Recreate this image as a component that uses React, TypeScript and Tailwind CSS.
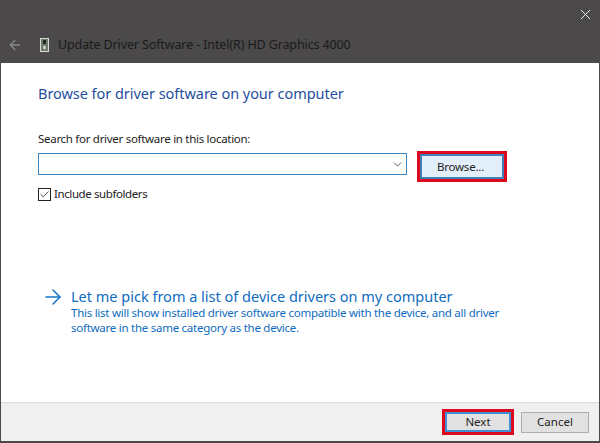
import { X, ArrowLeft, ArrowRight, ChevronDown, Check } from "lucide-react";

const font = { fontFamily: '"Noto Sans", "Open Sans", sans-serif' };

function DriverIcon() {
  return (
    <svg width="9" height="14" viewBox="0 0 9 14" className="shrink-0">
      <rect x="0.5" y="0.5" width="8" height="13" fill="#6f7a6c" stroke="#d5d9d2" />
      <rect x="3" y="2" width="3" height="4" fill="#1c2b1c" />
      <rect x="3.5" y="8" width="2" height="3" fill="#e8ece6" />
    </svg>
  );
}

export default function App() {
  return (
    <div
      className="flex h-[443px] w-[600px] flex-col overflow-hidden border-x border-b-2 border-x-[#4b4949] border-b-[#4b4949] bg-white antialiased"
      style={font}
    >
      <div className="flex h-[63px] shrink-0 flex-col bg-[#4b4949]">
        <div className="flex h-[30px] justify-end pr-[5px] pt-[6px]">
          <X size={17} strokeWidth={1.4} className="text-[#ececec]" />
        </div>
        <div className="flex items-center pl-[6px] pt-[7px]">
          <ArrowLeft size={16} strokeWidth={2} className="text-[#8a8888]" />
          <div className="ml-[17px] flex">
            <DriverIcon />
          </div>
          <span className="ml-[9px] text-[12.5px] leading-4 tracking-[-0.12px] text-[#1b1b1b]">
            Update Driver Software - Intel(R) HD Graphics 4000
          </span>
        </div>
      </div>

      <div className="flex min-h-0 flex-1 flex-col pl-[37px]">
        <h1 className="mt-[20px] text-[14.5px] font-normal leading-5 tracking-[-0.04px] text-[#1f4e9c]">
          Browse for driver software on your computer
        </h1>
        <p className="mt-[28px] text-[11.5px] leading-4 tracking-[-0.29px] text-[#222]">
          Search for driver software in this location:
        </p>
        <div className="mt-[6px] flex items-start">
          <div className="flex h-[22px] w-[369px] items-center justify-end border border-[#3a87c4] pr-[2px]">
            <ChevronDown size={13} strokeWidth={1.6} className="text-[#444]" />
          </div>
          <div className="ml-[10px] mt-[-2px] border-[3px] border-[#dd0a1e]">
            <button
              type="button"
              className="block h-[25px] w-[84px] border-2 border-[#3f80b8] bg-[#e3eefb] pr-[3px] text-[11.5px] tracking-[-0.2px] text-[#222]"
            >
              Browse...
            </button>
          </div>
        </div>
        <label className="mt-[4px] flex items-center gap-[3px]">
          <span className="flex h-[13px] w-[13px] items-center justify-center border border-[#222] bg-white">
            <Check size={11} strokeWidth={1.8} className="text-[#222]" />
          </span>
          <span className="text-[11.5px] leading-4 tracking-[-0.4px] text-[#222]">Include subfolders</span>
        </label>

        <div className="mt-[84px] flex pl-[3px]">
          <ArrowRight size={24} strokeWidth={1.5} className="mt-[-1px] text-[#1273cc]" />
          <div className="ml-[6px]">
            <p className="text-[14.5px] leading-5 tracking-[0px] text-[#0f6cc0]">
              Let me pick from a list of device drivers on my computer
            </p>
            <p className="mt-[-1px] w-[450px] text-[11.5px] leading-[15px] tracking-[-0.26px] text-[#0f6cc0]">
              This list will show installed driver software compatible with the device, and all driver software in the same category as the device.
            </p>
          </div>
        </div>
      </div>

      <div className="flex h-[39px] shrink-0 items-center justify-end border-t border-[#dcdcdc] bg-[#f0f0f0] pr-[10px]">
        <div className="border-[3px] border-[#dd0a1e]">
          <button
            type="button"
            className="block h-[20px] w-[66px] border-2 border-[#3f8fd6] bg-[#e1e1e1] text-[11.5px] leading-4 text-[#222]"
          >
            Next
          </button>
        </div>
        <button
          type="button"
          className="ml-[7px] h-[21px] w-[68px] border border-[#adadad] bg-[#e1e1e1] text-[11.5px] leading-4 text-[#222]"
        >
          Cancel
        </button>
      </div>
    </div>
  );
}
